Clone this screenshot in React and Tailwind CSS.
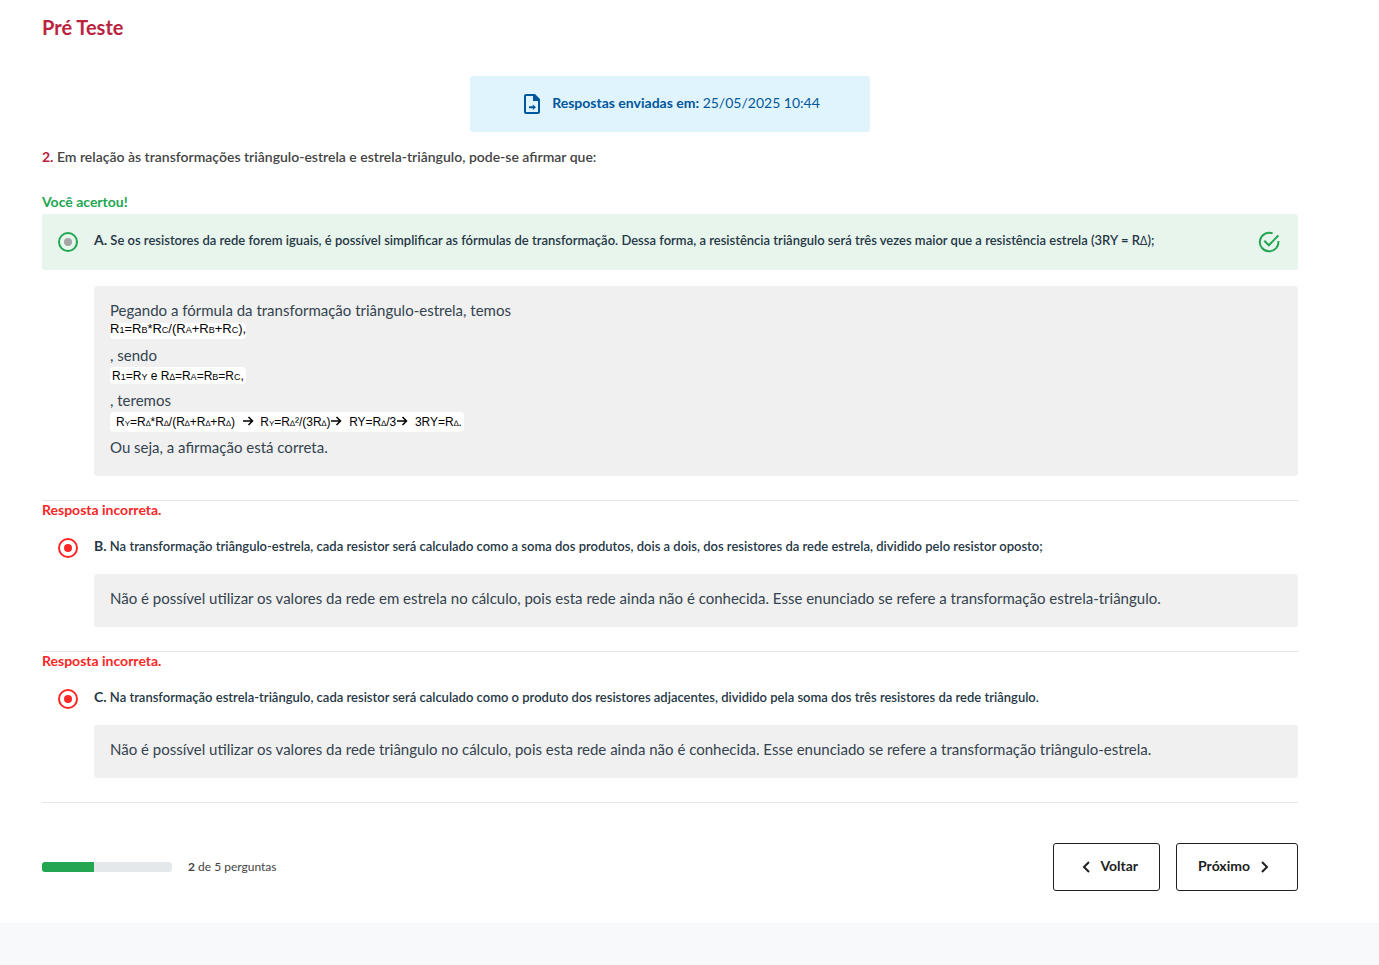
import React from "react";

function Formula({ children, className }) {
  return (
    <p className={`flex w-fit items-center whitespace-pre rounded-sm bg-white font-['Liberation_Sans',Arial,sans-serif] text-black ${className}`}>
      <span>{children}</span>
    </p>
  );
}

const sub = (text) => <span className="text-[9px]">{text}</span>;
const small = (text) => <span className="text-[8px]">{text}</span>;

function Arrow() {
  return (
    <svg viewBox="0 0 12 10" className="inline-block h-[10px] w-3 align-baseline" fill="none" stroke="currentColor" strokeWidth="1.5" aria-hidden="true">
      <path d="M1 5h9M6.5 1l4 4-4 4" />
    </svg>
  );
}

function Feedback({ children }) {
  return <div className="rounded-[3px] bg-[#f0f0f0] px-4 pt-[14px] pb-[18px] text-[15px] leading-[21px] text-[#35434f]">{children}</div>;
}

function Choice({ letter, correct, children }) {
  return (
    <div className={`flex h-14 items-center rounded-[3px] pl-4 pr-[18px] ${correct ? "bg-[#e8f5ec]" : ""}`}>
      <input
        id={`option-${letter}`}
        type="radio"
        name={`option-${letter}`}
        defaultChecked
        className={`m-0 size-5 shrink-0 appearance-none rounded-full border-2 bg-clip-content p-1 ${correct ? "border-[#22a652] bg-[#a6a6a6]" : "border-[#fb2626] bg-[#fb2626]"}`}
      />
      <label htmlFor={`option-${letter}`} className="ml-4 flex-1 pb-1 text-[13px] leading-5 font-semibold text-[#263746]">
        <span className="text-[14px] font-bold">{letter}.</span> {children}
      </label>
      {correct && (
        <svg viewBox="0 0 22 22" className="size-[22px]" fill="none" stroke="#22a652" strokeWidth="2" aria-hidden="true">
          <path d="M14.6 2.4A9.3 9.3 0 1 0 20.4 10M6.3 9.8l4.5 4.5L20.4 4.4" />
        </svg>
      )}
    </div>
  );
}

function Incorrect({ letter, text, children }) {
  return (
    <section className="border-t border-[#e4e7ea] pb-6">
      <p className="mb-[2px] text-[14px] leading-[17px] font-bold text-[#fb2626]">Resposta incorreta.</p>
      <Choice letter={letter}>{text}</Choice>
      <div className="-mt-[2px] ml-[52px]">
        <Feedback>{children}</Feedback>
      </div>
    </section>
  );
}

export default function App() {
  return (
    <div className="min-h-screen bg-[#f8f9fb] font-[Lato,'Open_Sans',sans-serif] text-[#444]">
      <main className="bg-white pt-[15px] pr-[81px] pb-8 pl-[42px]">
        <h1 className="text-[20px] leading-6 font-bold text-[#ba2440]">Pré Teste</h1>

        <div className="mx-auto mt-[37px] flex h-14 max-w-[400px] items-center justify-center gap-2 rounded-[3px] bg-[#e0f4fe] text-[14px] text-[#01579b]">
          <svg viewBox="0 0 24 24" className="size-6" fill="currentColor" aria-hidden="true">
            <path fillRule="evenodd" d="M6 2h9l5 5v13a2 2 0 0 1-2 2H6a2 2 0 0 1-2-2V4a2 2 0 0 1 2-2zm0 2v16h12V9h-5V4z" />
            <path d="M9 14.2h3.8V12.4l3.2 2.8-3.2 2.8v-1.8H9z" />
          </svg>
          <p className="pb-1">
            <strong className="font-bold">Respostas enviadas em:</strong> 25/05/2025 10:44
          </p>
        </div>

        <h2 className="mt-[15px] text-[14px] leading-5 font-semibold">
          <span className="font-bold text-[#ba2440]">2.</span> Em relação às transformações triângulo-estrela e estrela-triângulo, pode-se afirmar que:
        </h2>

        <section className="mt-6 pb-6">
          <p className="mb-px text-[14px] leading-[22px] font-bold text-[#22a652]">Você acertou!</p>
          <Choice letter="A" correct>
            Se os resistores da rede forem iguais, é possível simplificar as fórmulas de transformação. Dessa forma, a resistência triângulo será três vezes maior que a resistência estrela (3RY = R<span className="font-normal">∆</span>);
          </Choice>
          <div className="mt-4 ml-[52px]">
            <Feedback>
              <p>Pegando a fórmula da transformação triângulo-estrela, temos</p>
              <Formula className="mt-[2px] h-4 pb-1 text-[13px] leading-3">
                R{sub("1")}=R{sub("B")}*R{sub("C")}/(R{sub("A")}+R{sub("B")}+R{sub("C")}),
              </Formula>
              <p className="mt-[6px]">, sendo</p>
              <Formula className="mt-px h-[17px] px-[2px] pt-[2px] text-[12px]">
                R{sub("1")}=R{sub("Y")} e R{sub("∆")}=R{sub("A")}=R{sub("B")}=R{sub("C")},
              </Formula>
              <p className="mt-[6px]">, teremos</p>
              <Formula className="mt-px h-5 pt-[2px] pr-[2px] pl-[6px] text-[12px]">
                R{small("Y")}=R{small("∆")}*R{small("∆")}/(R{small("∆")}+R{small("∆")}+R{small("∆")}){"  "}<Arrow />{"  "}R{small("Y")}=R{small("∆")}²/(3R{small("∆")})<Arrow />{"  "}RY=R{small("∆")}/3<Arrow />{"  "}3RY=R{small("∆")}.
              </Formula>
              <p className="mt-[5px]">Ou seja, a afirmação está correta.</p>
            </Feedback>
          </div>
        </section>

        <Incorrect letter="B" text="Na transformação triângulo-estrela, cada resistor será calculado como a soma dos produtos, dois a dois, dos resistores da rede estrela, dividido pelo resistor oposto;">
          Não é possível utilizar os valores da rede em estrela no cálculo, pois esta rede ainda não é conhecida. Esse enunciado se refere a transformação estrela-triângulo.
        </Incorrect>
        <Incorrect letter="C" text="Na transformação estrela-triângulo, cada resistor será calculado como o produto dos resistores adjacentes, dividido pela soma dos três resistores da rede triângulo.">
          Não é possível utilizar os valores da rede triângulo no cálculo, pois esta rede ainda não é conhecida. Esse enunciado se refere a transformação triângulo-estrela.
        </Incorrect>

        <footer className="flex items-center justify-between border-t border-[#e4e7ea] pt-10">
          <div className="flex items-center gap-4">
            <div className="h-[10px] w-[130px] overflow-hidden rounded-[3px] bg-[#e4e8eb]">
              <div className="h-full w-2/5 bg-[#22a652]" />
            </div>
            <p className="text-[12px]">
              <strong>2</strong> de 5 perguntas
            </p>
          </div>
          <div className="flex gap-4 text-[14px] font-bold text-[#212121]">
            <button type="button" className="flex h-12 items-center gap-[10px] rounded-[3px] border border-[#212121] pr-[21px] pb-1 pl-7">
              <svg viewBox="0 0 8 12" className="mt-1 h-3 w-2" fill="none" stroke="currentColor" strokeWidth="2" aria-hidden="true">
                <path d="M7 1L2 6l5 5" />
              </svg>
              Voltar
            </button>
            <button type="button" className="flex h-12 items-center gap-[10px] rounded-[3px] border border-[#212121] pr-7 pb-1 pl-[21px]">
              Próximo
              <svg viewBox="0 0 8 12" className="mt-1 ml-px h-3 w-2" fill="none" stroke="currentColor" strokeWidth="2" aria-hidden="true">
                <path d="M1 1l5 5-5 5" />
              </svg>
            </button>
          </div>
        </footer>
      </main>
    </div>
  );
}
